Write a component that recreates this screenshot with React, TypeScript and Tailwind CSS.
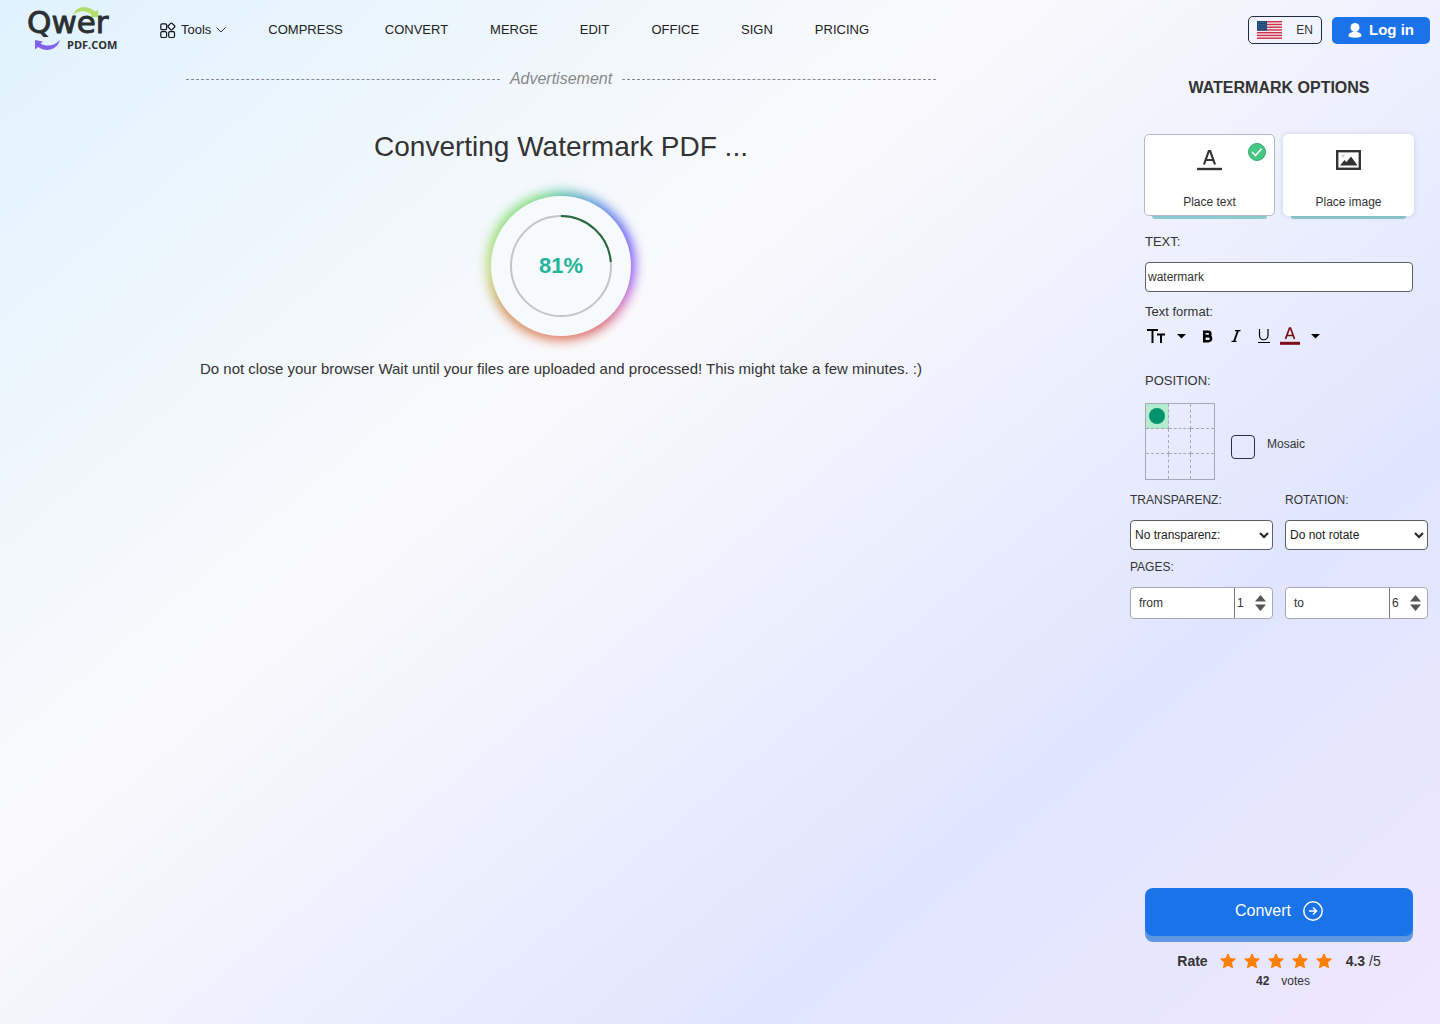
import { useState } from "react";

type Kind = "text" | "image";

const NAV_ITEMS = ["Compress", "Convert", "Merge", "Edit", "Office", "Sign", "Pricing"];

function Logo() {
  return (
    <svg width="96" height="50" viewBox="0 0 96 50" aria-hidden="true">
      <text x="1" y="28" fill="#2b2f31" stroke="#2b2f31" strokeWidth="0.9" fontSize="31" fontFamily="'DejaVu Sans', sans-serif">
        Qwer
      </text>
      <text x="41" y="44" fill="#2b2f31" fontSize="11" fontWeight="700" fontFamily="'Open Sans', 'Noto Sans', sans-serif">
        PDF.COM
      </text>
      <path d="M47 10C50 1 61 -1 69 6.500L72 5V12H64L66 10C60 5 53 5 47 10Z" fill="#b3dd6b" />
      <path d="M34 35C31 44.500 21 48 12 42L9 44.500V35L17 36.500L14.500 38.500C21 42 28 41 34 35Z" fill="#8260ef" />
    </svg>
  );
}

function ToolsIcon() {
  return (
    <svg width="16" height="17" viewBox="0 0 16 17" fill="none" stroke="#111" strokeWidth="1.200" aria-hidden="true">
      <rect x="0.800" y="1.800" width="5.800" height="5.800" rx="1.200" />
      <rect x="8.700" y="1.800" width="5.400" height="5.400" rx="1" transform="rotate(45 11.400 4.500)" />
      <rect x="0.800" y="9.700" width="5.800" height="5.800" rx="1.200" />
      <rect x="8.700" y="9.700" width="5.800" height="5.800" rx="1.200" />
    </svg>
  );
}

function Flag() {
  return (
    <svg width="25" height="18" viewBox="0 0 25 18" aria-hidden="true">
      <rect width="25" height="18" fill="#fbe9ec" />
      {[0, 1, 2, 3, 4, 5, 6].map((n) => (
        <rect key={n} y={n * 2.75} width="25" height="1.400" fill="#c9304a" />
      ))}
      <rect width="10" height="9.600" fill="#1c4a78" />
      {[1.5, 3.5, 5.5, 7.5].map((y) => (
        <path key={y} d={`M1 ${y}H9.500`} stroke="#5f87a8" strokeWidth="0.700" strokeDasharray="0.800 1" />
      ))}
    </svg>
  );
}

function Progress({ value }: { value: number }) {
  return (
    <div className="relative mt-[33px] h-[140px] w-[140px]">
      <div className="absolute -inset-1 rounded-full bg-[conic-gradient(#4cbc9c,#4a7ee0_35deg,#5a50f5_65deg,#9a58f0_100deg,#d060a8_125deg,#d65858_150deg,#dc7450_185deg,#d0884a_230deg,#bcd870_265deg,#80dc68_310deg,#6cd87c_345deg,#4cbc9c)] blur-[6px]" />
      <div className="relative flex h-full w-full items-center justify-center rounded-full bg-[#f7fafd]">
        <svg className="absolute inset-0" width="140" height="140" viewBox="0 0 140 140" fill="none" strokeWidth="2" aria-hidden="true">
          <circle cx="70" cy="70" r="50" stroke="#c2c4c8" />
          <path d="M70 20A50 50 0 0 1 119.800 66" stroke="#256a3a" />
        </svg>
        <span className="relative pb-0.5 text-[22px] font-bold text-[#1fb597]">{value}%</span>
      </div>
    </div>
  );
}

function TextIcon() {
  return (
    <svg width="25" height="24" viewBox="0 0 25 24" fill="none" stroke="#333" aria-hidden="true">
      <path d="M7 17.500L11.800 4H13.200L18 17.500M8.800 13H16.200" strokeWidth="2.200" />
      <path d="M0 22H25" strokeWidth="2.400" />
    </svg>
  );
}

function ImageIcon() {
  return (
    <svg width="25" height="24" viewBox="0 0 25 24" fill="none" aria-hidden="true">
      <rect x="1.200" y="4.200" width="22.600" height="17.600" stroke="#333" strokeWidth="2.400" />
      <circle cx="7" cy="9" r="1.700" fill="#d5d5d5" />
      <path d="M4 18.500L8.500 13L10.500 15L15 9.500L21.500 18.500Z" fill="#333" />
    </svg>
  );
}

function KindCard({
  kind,
  label,
  active,
  onSelect,
}: {
  kind: Kind;
  label: string;
  active: boolean;
  onSelect: (kind: Kind) => void;
}) {
  return (
    <div className="flex-1">
      <button
        onClick={() => onSelect(kind)}
        aria-pressed={active}
        className={`relative flex h-[82px] w-full flex-col items-center rounded-[5px] border bg-white pt-3 text-xs text-[#333] ${
          active ? "border-[#b5b5c5]" : "border-white shadow-[0_0_5px_rgba(80,90,140,0.2)]"
        }`}
      >
        {kind === "text" ? <TextIcon /> : <ImageIcon />}
        <span className="mt-[23px]">{label}</span>
        {active && (
          <svg className="absolute top-2 right-2" width="18" height="18" viewBox="0 0 18 18" fill="none" aria-hidden="true">
            <circle cx="9" cy="9" r="8.500" fill="#46c884" stroke="#35a86d" />
            <path d="M4 9L7.500 12.500L13.500 5.800" stroke="#fff" strokeWidth="1.600" />
          </svg>
        )}
      </button>
      <div className="mx-2 h-[3px] rounded-b bg-[#8cc8cf]" />
    </div>
  );
}

function Caret() {
  return (
    <svg width="9" height="5" viewBox="0 0 9 5" aria-hidden="true">
      <path d="M0 0H9L4.500 4.500Z" fill="#000" />
    </svg>
  );
}

function FormatBar() {
  return (
    <div className="flex h-7 items-center">
      <button aria-label="Font size" className="flex items-center gap-[11px]">
        <svg width="21" height="16" viewBox="0 0 21 16" fill="none" stroke="#000" strokeWidth="2" aria-hidden="true">
          <path d="M2 2H13M7.500 2V15M12 6.500H20M16 6.500V15" />
        </svg>
        <Caret />
      </button>
      <button aria-label="Bold" className="ml-4">
        <svg width="12" height="13" viewBox="0 0 12 13" fill="none" stroke="#000" strokeWidth="2.600" aria-hidden="true">
          <path d="M2.300 0.500V12.500M1 1.800H6.200A2.100 2.100 0 0 1 6.200 6.100H2M6.500 6.100A2.500 2.500 0 0 1 6.500 11.200H1" />
        </svg>
      </button>
      <button aria-label="Italic" className="ml-[17px]">
        <svg width="10" height="12" viewBox="0 0 10 12" fill="none" stroke="#000" aria-hidden="true">
          <path d="M4 0.600H9.500M0.500 11.400H5.500" strokeWidth="1.200" />
          <path d="M6.900 0.600L3.100 11.400" strokeWidth="1.800" />
        </svg>
      </button>
      <button aria-label="Underline" className="ml-4">
        <svg width="14" height="16" viewBox="0 0 14 16" fill="none" stroke="#000" strokeWidth="1.200" aria-hidden="true">
          <path d="M2.500 1V7.500A4.200 4.200 0 0 0 11 7.500V1M1 14.500H13" />
        </svg>
      </button>
      <button aria-label="Text color" className="ml-[9px] flex items-center gap-[11px]">
        <svg width="20" height="18" viewBox="0 0 20 18" fill="none" stroke="#7d0b14" aria-hidden="true">
          <path d="M5.500 12L9.500 1H10.500L14.500 12M7 8.500H13" strokeWidth="1.700" />
          <path d="M0 16.300H20" strokeWidth="3" />
        </svg>
        <Caret />
      </button>
    </div>
  );
}

function PositionGrid({ value, onChange }: { value: number; onChange: (n: number) => void }) {
  return (
    <div className="grid h-[77px] w-[70px] grid-cols-3 grid-rows-3 border border-[#a5a8b5]">
      {Array.from({ length: 9 }, (_, n) => (
        <button
          key={n}
          aria-label={`Position ${n + 1}`}
          onClick={() => onChange(n)}
          className={`flex items-center justify-center border-dashed border-[#a5a8b5] ${n % 3 < 2 ? "border-r" : ""} ${
            n < 6 ? "border-b" : ""
          } ${n === value ? "bg-[#b5eccd]" : ""}`}
        >
          {n === value && <span className="h-4 w-4 rounded-full bg-[#06946f]" />}
        </button>
      ))}
    </div>
  );
}

function SelectField({ id, label, options }: { id: string; label: string; options: string[] }) {
  return (
    <div className="min-w-0 flex-1">
      <label htmlFor={id} className="block h-7 leading-4">
        {label}
      </label>
      <select id={id} className="h-[30px] w-full rounded border border-[#5d6067] bg-white text-xs text-[#222]">
        {options.map((o) => (
          <option key={o}>{o}</option>
        ))}
      </select>
    </div>
  );
}

function PageField({ id, label, initial }: { id: string; label: string; initial: number }) {
  const [page, setPage] = useState(initial);

  return (
    <div className="flex h-8 min-w-0 flex-1 items-stretch rounded border border-[#a5a8b5] bg-white">
      <label htmlFor={id} className="flex flex-1 items-center border-r border-[#777] pl-2">
        {label}
      </label>
      <input
        id={id}
        value={page}
        onChange={(e) => setPage(Number(e.target.value) || 1)}
        className="w-5 pl-0.5 focus:outline-none"
      />
      <div className="mr-1.5 flex flex-col justify-center gap-[2px]">
        <button aria-label={`Increase ${label}`} onClick={() => setPage(page + 1)}>
          <svg width="11" height="7" viewBox="0 0 11 7" aria-hidden="true">
            <path d="M0 6.500L5.500 0L11 6.500Z" fill="#555" />
          </svg>
        </button>
        <button aria-label={`Decrease ${label}`} onClick={() => setPage(Math.max(1, page - 1))}>
          <svg width="11" height="7" viewBox="0 0 11 7" aria-hidden="true">
            <path d="M0 0.500L5.500 7L11 0.500Z" fill="#555" />
          </svg>
        </button>
      </div>
    </div>
  );
}

function Header() {
  return (
    <header className="flex h-[60px] items-center pr-2.5 pl-[26px]">
      <a href="#" aria-label="QwerPDF.com" className="flex">
        <Logo />
      </a>
      <nav className="ml-[38px] flex items-center text-[13px] text-[#222]">
        <button className="flex items-center gap-[5px]">
          <ToolsIcon />
          <span>Tools</span>
          <svg width="10" height="6" viewBox="0 0 10 6" fill="none" stroke="#333" aria-hidden="true">
            <path d="M0.500 0.500L5 5L9.500 0.500" />
          </svg>
        </button>
        <div className="ml-[42px] flex gap-[42px]">
          {NAV_ITEMS.map((item) => (
            <a key={item} href="#" className="uppercase">
              {item}
            </a>
          ))}
        </div>
      </nav>
      <div className="ml-auto flex items-center gap-2.5">
        <button className="flex h-7 items-center gap-3.5 rounded-[5px] border border-[#1f2a44] px-2 text-xs text-[#333]">
          <Flag />
          EN
        </button>
        <button className="flex h-[27px] items-center gap-[7px] rounded-[5px] bg-[#1a73e8] px-4 text-[15px] font-bold text-white">
          <svg width="14" height="15" viewBox="0 0 14 15" fill="currentColor" aria-hidden="true">
            <ellipse cx="7" cy="4.500" rx="4.500" ry="4.500" />
            <path d="M0.500 13C0.500 10 3 9.500 4.500 9H9.500C11 9.500 13.500 10 13.500 13C12.500 15.200 1.500 15.200 0.500 13Z" />
          </svg>
          Log in
        </button>
      </div>
    </header>
  );
}

function Options() {
  const [kind, setKind] = useState<Kind>("text");
  const [text, setText] = useState("watermark");
  const [position, setPosition] = useState(0);
  const [mosaic, setMosaic] = useState(false);

  return (
    <aside className="flex w-[320px] shrink-0 flex-col pt-4 pb-[35px] text-xs text-[#333]">
      <h2 className="pr-0.5 text-center text-base font-bold">WATERMARK OPTIONS</h2>
      <div className="mt-[34px] flex gap-2 pr-[26px] pl-6">
        <KindCard kind="text" label="Place text" active={kind === "text"} onSelect={setKind} />
        <KindCard kind="image" label="Place image" active={kind === "image"} onSelect={setKind} />
      </div>

      <div className="pr-[27px] pl-[25px]">
        <label htmlFor="wm-text" className="mt-[13px] block text-[13px] leading-5">
          TEXT:
        </label>
        <input
          id="wm-text"
          value={text}
          onChange={(e) => setText(e.target.value)}
          className="mt-2.5 h-[30px] w-full rounded border border-[#5d6067] bg-white px-0.5 text-xs focus:outline-none"
        />
        <div className="mt-[10px] text-[13px] leading-5">Text format:</div>
        <FormatBar />
        <div className="mt-[21px] text-[13px] leading-5">POSITION:</div>
        <div className="mt-3 flex items-center">
          <PositionGrid value={position} onChange={setPosition} />
          <label className="ml-4 flex items-center gap-3 pt-2.5">
            <input
              type="checkbox"
              checked={mosaic}
              onChange={(e) => setMosaic(e.target.checked)}
              className="h-6 w-6 appearance-none rounded border border-[#2b2f40] checked:bg-[#06946f]"
            />
            <span className="pb-1.5">Mosaic</span>
          </label>
        </div>
      </div>

      <div className="mt-3 flex gap-3 pr-3 pl-2.5">
        <SelectField id="transparency" label="TRANSPARENZ:" options={["No transparenz:", "25%", "50%", "75%"]} />
        <SelectField id="rotation" label="ROTATION:" options={["Do not rotate", "45 degrees", "90 degrees", "180 degrees"]} />
      </div>
      <div className="mt-[9px] pl-2.5 leading-4">PAGES:</div>
      <div className="mt-3 flex gap-3 pr-3 pl-2.5">
        <PageField id="page-from" label="from" initial={1} />
        <PageField id="page-to" label="to" initial={6} />
      </div>

      <div className="mt-auto pr-[27px] pl-[25px]">
        <button className="flex h-12 w-full items-center justify-center gap-3 rounded-lg bg-[#1a73e8] pb-0.5 text-base text-white shadow-[0_6px_0_#5f97e2]">
          Convert
          <svg width="20" height="20" viewBox="0 0 20 20" fill="none" stroke="currentColor" strokeWidth="1.500" aria-hidden="true">
            <circle cx="10" cy="10" r="9.200" />
            <path d="M6 10H13.500M10 6.500L13.500 10L10 13.500" />
          </svg>
        </button>
        <div className="mt-[13px] flex h-6 items-center justify-center text-sm">
          <span className="font-bold">Rate</span>
          <div className="mr-3.5 ml-3 flex gap-2">
            {[1, 2, 3, 4, 5].map((n) => (
              <button key={n} aria-label={`Rate ${n}`}>
                <svg width="16" height="16" viewBox="0 0 16 16" fill="#ff7f00" stroke="#ff7f00" strokeLinejoin="round" aria-hidden="true">
                  <path d="M8 1L10.100 5.500L15.300 6L11.400 9.500L12.600 14.800L8 12.200L3.400 14.800L4.600 9.500L0.700 6L5.900 5.500Z" />
                </svg>
              </button>
            ))}
          </div>
          <span>
            <b>4.3</b> /5
          </span>
        </div>
        <div className="flex justify-center gap-3 pl-2 leading-4">
          <b>42</b>
          <span>votes</span>
        </div>
      </div>
    </aside>
  );
}

export default function App() {
  return (
    <div className="flex min-h-screen flex-col bg-[linear-gradient(140deg,#e0f2fe,#fafafc_38%,#e0e5ff_74%,#efe7fe)] font-['Liberation_Sans',Arial,sans-serif]">
      <Header />
      <div className="flex flex-1">
        <main className="flex min-w-0 flex-1 flex-col items-center pl-0.5 text-[#333]">
          <div className="flex w-[750px] max-w-full items-center gap-2.5 pt-[7px] text-base text-[#888] italic">
            <span className="flex-1 border-t border-dashed border-[#888]" />
            Advertisement
            <span className="flex-1 border-t border-dashed border-[#888]" />
          </div>
          <h1 className="mt-10 text-[28px] leading-8">Converting Watermark PDF ...</h1>
          <Progress value={81} />
          <p className="mt-[23px] text-[15px] leading-5">
            Do not close your browser Wait until your files are uploaded and processed! This might take a few minutes. :)
          </p>
        </main>
        <Options />
      </div>
    </div>
  );
}
